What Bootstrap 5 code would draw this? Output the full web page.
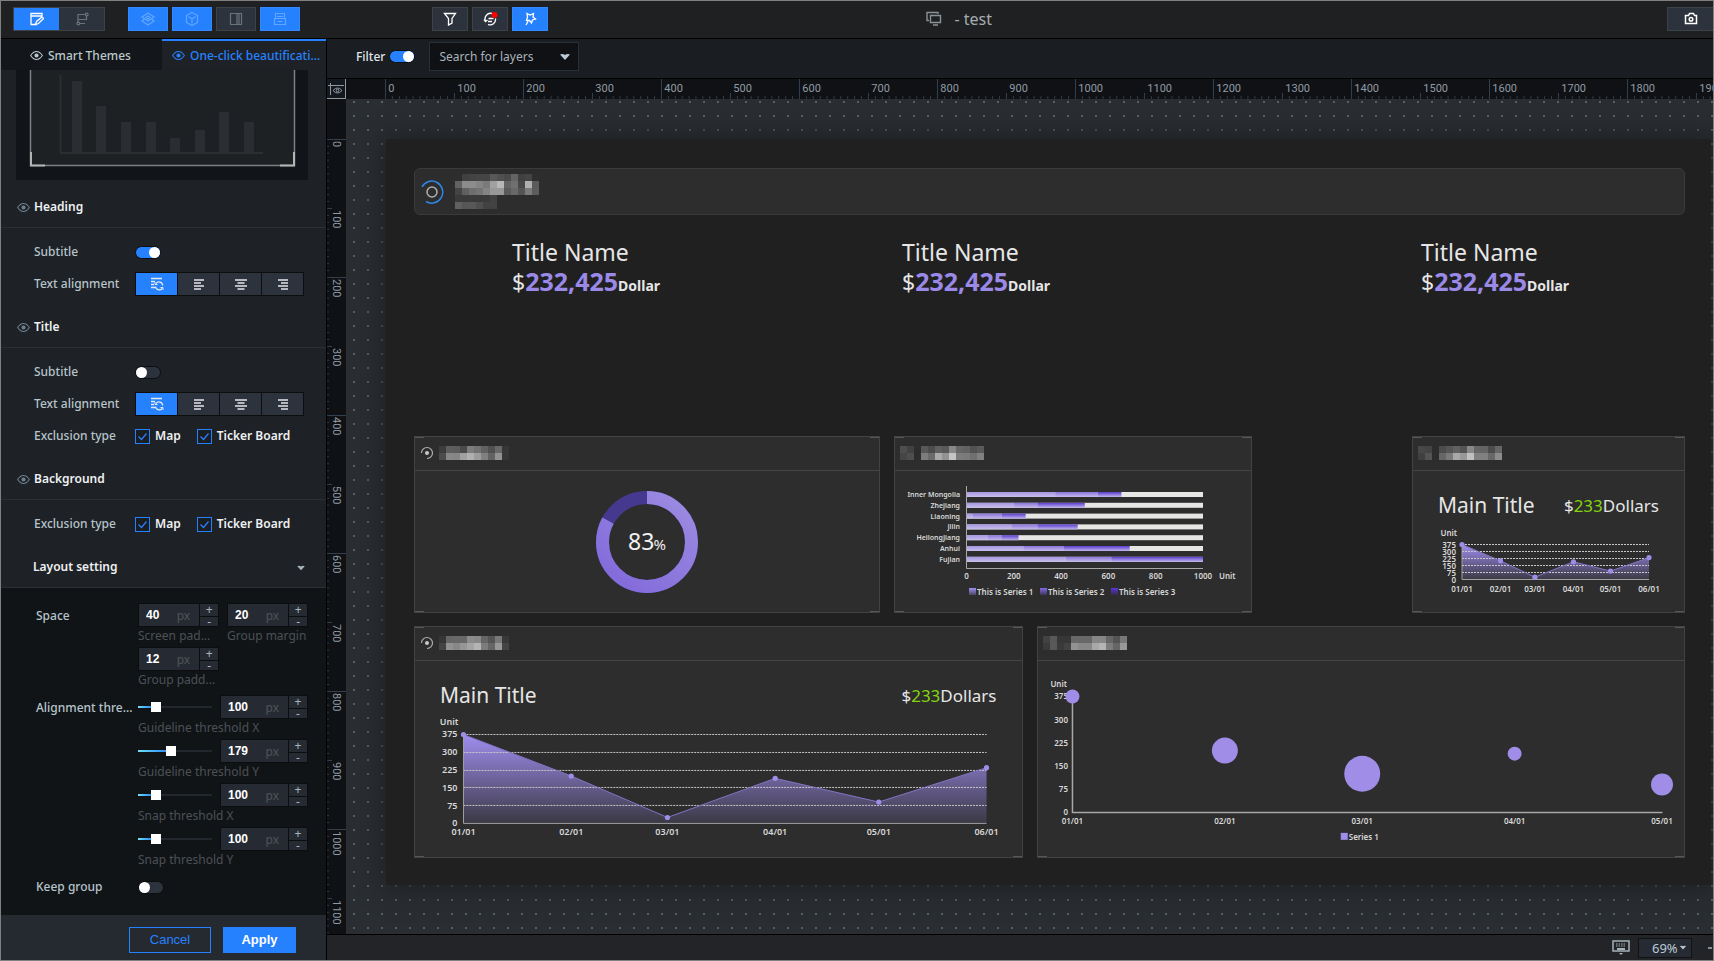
<!DOCTYPE html>
<html lang="en">
<head>
<meta charset="utf-8">
<meta name="viewport" content="width=device-width, initial-scale=1">
<title>test - screen editor</title>
<link href="https://cdn.jsdelivr.net/npm/bootstrap@5.3.0/dist/css/bootstrap.min.css" rel="stylesheet">
<style>
:root{--accent:#2681ff;--panel:#1e2125;--field:#262b33;--txt:#b6c4cc;--key:#0c0d0f}
html,body{height:100%}
body{font-family:"Noto Sans","Open Sans",sans-serif;font-size:12px;line-height:18px;color:#bcc9d4;background:#1b1d1f;overflow:hidden;border:1px solid #808080}
svg{display:block;flex:none}
button{font:inherit;color:inherit}
.app{height:100%}
.topbar{height:38px;background:#1f2022;border-bottom:1px solid #000;padding:0 0 2px 12px}
.tool{width:40px;height:24px;padding:0;border:1px solid #3c424a;background:#2d333d;display:flex;align-items:center;justify-content:center;color:#6b727d;border-radius:0}
.tool.on{background:var(--accent);border-color:#3388ff;color:#62a6ff}
.tool.lit{color:#fff}
.tool.t36{width:36px}
.modes{border:1px solid #3c424a}
.modes .tool{width:45px;height:22px;border:0}
.tools-a{margin-left:23px}
.tools-b{margin-left:132px}
.space-a{flex:379 1 0}.space-b{flex:676 1 0}
.doc-title{font-size:16px;color:#a5acb1}
.shot{width:46px;border-right:0}

.side{width:326px;background:var(--panel);border-right:1px solid #000}
.side-tab{height:31px;border:0;background:#13161a;color:#bcc9cc;font-weight:500;padding:2px 0 0 29px;display:flex;align-items:center;gap:5px;flex:0 1 161px;white-space:nowrap}
.side-tab.on{background:var(--panel);color:var(--accent);border-top:2px solid var(--accent);padding:0 0 0 10px;flex:1 1 164px}
.preview{margin:0 18px 0 15px;background:#111418}
.sec{height:48px;padding:8px 16px 0;border-bottom:1px solid #2b2f33;gap:4px;color:#eef1f3;font-size:12px;font-weight:600;margin:0}
.lab{width:101px;color:var(--txt);font-weight:500;white-space:nowrap}
.line{padding-left:33px;min-height:32px}
.sw{appearance:none;width:26px;height:13px;border-radius:7px;background:#2d333d;border:1px solid var(--key);margin:0;position:relative;display:block;flex:none}
.sw::after{content:"";position:absolute;left:0;top:0;width:11px;height:11px;border-radius:50%;background:#fff}
.sw:checked{background:var(--accent)}
.sw:checked::after{left:13px}
.aligns{border:1px solid var(--key);background:var(--key);gap:1px}
.aligns button{width:41px;height:22px;border:0;padding:0;background:#2d333d;color:#e4e8ec;display:flex;align-items:center;justify-content:center}
.aligns button.on{background:var(--accent)}
.tick{appearance:none;width:15px;height:15px;margin:0;border:1px solid var(--accent);background:#1a1d22;flex:none}
.tick:checked{background-image:url("data:image/svg+xml,%3Csvg xmlns='http://www.w3.org/2000/svg' viewBox='0 0 13 13'%3E%3Cpath d='M2.5 6.5l3 3 5-6' fill='none' stroke='%232681ff' stroke-width='1.2'/%3E%3C/svg%3E")}
.tick-l{color:#eef1f3;font-weight:600;gap:5px}
.detail{background:#111416;flex:1 1 auto;padding:15px 18px 0 35px}
.lab2{width:102px;color:var(--txt);font-weight:500;white-space:nowrap;flex:none}
.num{height:24px;border:1px solid var(--key);background:var(--key)}
.num input{min-width:0;width:38px;flex:1 1 auto;height:22px;border:0;background:var(--field);color:#fff;font:bold 12px "Liberation Sans",sans-serif;padding:0 0 0 7px}
.num .u{background:var(--field);color:#4d5359;padding:3px 9px 0 0;height:22px}
.num .st{width:18px;display:flex;flex-direction:column;gap:1px;margin-left:1px}
.num .st button{border:0;padding:0;height:12px;line-height:10px;font-size:12px;background:var(--field);color:#aab4bd;flex:none}
.num .st button+button{height:9px;line-height:7px}
.n82{width:81px}.n88{width:88px}
.hint{color:#4b5157;height:20px;line-height:18px;white-space:nowrap}
.cell{height:44px}
.sliders{padding-top:4px}
.keep{height:32px}
.rng{appearance:none;width:74px;height:10px;margin:0;background:linear-gradient(90deg,#6fe0f5,#2681ff) 0 50%/var(--f) 2px no-repeat,linear-gradient(#22272e,#22272e) 0 50%/100% 2px no-repeat}
.rng::-webkit-slider-thumb{appearance:none;width:10px;height:10px;background:#fff;border-radius:0}
.foot{height:45px;background:#252a31;padding:0 30px 0 0;gap:12px;font:13px/20px "Liberation Sans",sans-serif}
.foot button{height:26px;border:1px solid var(--accent);border-radius:0;padding:0;line-height:20px}
.b-cancel{width:82px;background:transparent;color:var(--accent)}
.foot .b-apply{width:73px;background:var(--accent);color:#fff;font-weight:700}

.filterbar{height:40px;background:#1a1d21;border-bottom:1px solid #000;padding:0 0 4px 29px}
.filter-l{color:#dfe4e8;font-weight:500}
.layer-pick{width:150px;height:29px;border:1px solid #2a3038;background:#0f1114 url("data:image/svg+xml,%3Csvg xmlns='http://www.w3.org/2000/svg' viewBox='0 0 12 8'%3E%3Cpath d='M1 1.5Q4 .5 6 2 8 .5 11 1.5L6 7z' fill='%23bcc9d4'/%3E%3C/svg%3E") right 7px center/12px 8px no-repeat;appearance:none;color:#aab3ba;padding:0 0 0 9px;margin-left:14px;border-radius:0}
.ruler-x{height:20px;background:#0f1114;overflow:hidden;padding-left:39px}
.corner{width:20px;border-right:1px solid #8c98a4;border-bottom:1px solid #8c98a4;background:#15181c}
.ruler-x span,.ruler-y span{flex:none;color:#8f9ba4;font:11px/14px Roboto,sans-serif;background-repeat:repeat-x,no-repeat;background-image:linear-gradient(90deg,#323a44 1px,transparent 1px),linear-gradient(#323f4e,#323f4e)}
.ruler-x span{width:69px;height:20px;padding:3px 0 0 3px;background-size:10% 3px,1px 6px;background-position:0 100%,0 100%}
.ruler-x .big{background-size:10% 3px,1px 100%}
.ruler-y{width:19px;background:#0f1114;overflow:hidden;padding-top:40px}
.ruler-y span{height:69px;width:19px;writing-mode:vertical-rl;padding:2px 3px 0 0;background-repeat:repeat-y,no-repeat;background-image:linear-gradient(#323a44 1px,transparent 1px),linear-gradient(#323f4e,#323f4e);background-size:2px 10%,5px 1px;background-position:0 0,0 0}
.ruler-y .big{background-size:2px 10%,100% 1px}
.desk{overflow:hidden;background:radial-gradient(circle at 8px 3px,#566164 1.2px,transparent 1.4px) 0 0/14px 14px,#2a2d31;padding:40px 2px 49px 40px}
.stage{background:#202020;box-shadow:0 0 24px 2px #1b1e22;padding:29px 26px 27px 28px;height:746px;color:#e6e6e6}
.banner{height:47px;border:1px solid #3a3a3a;border-radius:6px;background:#2d2d2d;padding-left:5px;gap:11px;flex:none}
.kpis{flex:1 1 auto;display:grid;grid-template-columns:390fr 519fr 264fr;padding:22px 0 0 98px}
.kpi-t{font-size:23px;line-height:30px}
.kpi-v{font-size:23px;line-height:28px}
.kpi-v b{color:#9b89e8;font-weight:700;font-size:25px}
.kpi-v i{font-style:normal;font-weight:700;font-size:14px}
.r1{display:grid;grid-template-columns:466fr 358fr 132fr 273fr;gap:14px;margin-bottom:13px;flex:none}
.r2{display:grid;grid-template-columns:609fr 649fr;gap:14px;flex:none}
.tile{--c:#575757;border:1px solid #424242;background:
 linear-gradient(var(--c),var(--c)) 0 0/9px 1px,linear-gradient(var(--c),var(--c)) 100% 0/9px 1px,linear-gradient(var(--c),var(--c)) 0 100%/9px 1px,linear-gradient(var(--c),var(--c)) 100% 100%/9px 1px,#2d2d2d;background-repeat:no-repeat;height:177px;min-width:0}
.r2 .tile{height:232px}
.tile-h{height:34px;border-bottom:1px solid #454545;padding:0 0 2px 5px;gap:5px}
.tile-m{height:53px;padding:17px 25px 0}
.tile-m h2{font-size:21px;line-height:34px;margin:0;font-weight:400}
.tile-m p{font-size:17px;line-height:36px;margin:0}
.tile-m em{font-style:normal;color:#84d40c}
.tile text{fill:#d8d8d8;font-family:"Noto Sans",sans-serif;font-weight:600;font-size:9px}
.tile svg.sm text{font-size:8px}
.tile svg.sm text.nm{font-size:7px}
.tile svg text.big{font-size:23px;fill:#f0f0f0;font-weight:400}
.tile svg text.pct{font-size:15px;fill:#f0f0f0;font-weight:400}
.status{height:26px;background:#222427;border-top:1px solid #000;padding-right:1px;margin-top:-1px}
.zoomsel{width:54px;height:20px;border:1px solid #101214;border-radius:0;appearance:none;color:#bcc9d4;font-size:13px;padding:0 0 0 13px;line-height:18px;background:#262b33 url("data:image/svg+xml,%3Csvg xmlns='http://www.w3.org/2000/svg' viewBox='0 0 12 8'%3E%3Cpath d='M1 1.5Q4 .5 6 2 8 .5 11 1.5L6 7z' fill='%23bcc9d4'/%3E%3C/svg%3E") right 4px center/8px 5px no-repeat}
</style>
</head>
<body>
<svg width="0" height="0" class="position-absolute" aria-hidden="true">
 <defs>
  <symbol id="eye" viewBox="0 0 12 10"><path d="M.6 5Q3 1.3 6 1.3T11.400 5Q9 8.700 6 8.700T.6 5z" fill="none" stroke="currentColor"/><circle cx="6" cy="5" r="1.900" fill="currentColor"/></symbol>
  <symbol id="al-a" viewBox="0 0 14 14"><path d="M1 1.500h11M1 4.500h4M1 7.500h3M1 10.500h4" stroke="currentColor" stroke-width="1.300"/><path d="M6 6.500A3.700 3.700 0 0 1 12.700 8.500M12.200 11.300A3.700 3.700 0 0 1 5.500 9.500" fill="none" stroke="currentColor" stroke-width="1.300"/><path d="M5 5v2.500h2.500M13 13v-2.500h-2.500" fill="none" stroke="currentColor"/></symbol>
  <symbol id="al-l" viewBox="0 0 12 12"><path d="M1 2h10M1 5h7M1 8h10M1 11h7" stroke="currentColor" stroke-width="1.500"/></symbol>
  <symbol id="al-c" viewBox="0 0 12 12"><path d="M0 2h12M2.500 5h7M0 8h12M2.500 11h7" stroke="currentColor" stroke-width="1.500"/></symbol>
  <symbol id="al-r" viewBox="0 0 12 12"><path d="M1 2h10M4 5h7M1 8h10M4 11h7" stroke="currentColor" stroke-width="1.500"/></symbol>
  <symbol id="spin" viewBox="0 0 14 14"><circle cx="7" cy="7" r="2" fill="#c8c8c8"/><path d="M1.500 7A5.500 5.500 0 1 1 7 12.500" fill="none" stroke="#b0b0b0" stroke-width="1.200"/></symbol>
  <linearGradient id="area" x1="0" y1="0" x2="0" y2="1"><stop offset="0" stop-color="#a08ef0"/><stop offset="1" stop-color="#a08ef0" stop-opacity=".12"/></linearGradient>
  <linearGradient id="ring" x1="1" y1=".8" x2="0" y2="0"><stop offset="0" stop-color="#9a89e0"/><stop offset="1" stop-color="#8068da"/></linearGradient>
  <linearGradient id="s1" x1="0" y1="0" x2="0" y2="1"><stop offset="0" stop-color="#a595e2"/><stop offset="1" stop-color="#c8c0ea"/></linearGradient>
  <linearGradient id="s2" x1="0" y1="0" x2="0" y2="1"><stop offset="0" stop-color="#8a74dc"/><stop offset="1" stop-color="#c4baea"/></linearGradient>
  <linearGradient id="s3" x1="0" y1="0" x2="0" y2="1"><stop offset="0" stop-color="#5b3ccf"/><stop offset="1" stop-color="#c0b4ec"/></linearGradient>
  <linearGradient id="k1" x1="0" y1="0" x2="0" y2="1"><stop offset="0" stop-color="#a08ef0"/><stop offset="1" stop-color="#4a4560"/></linearGradient>
  <linearGradient id="k2" x1="0" y1="0" x2="0" y2="1"><stop offset="0" stop-color="#8468e8"/><stop offset="1" stop-color="#3c3654"/></linearGradient>
  <linearGradient id="k3" x1="0" y1="0" x2="0" y2="1"><stop offset="0" stop-color="#5f35d8"/><stop offset="1" stop-color="#322a4c"/></linearGradient>
 </defs>
</svg>
<div class="app d-flex flex-column">
 <header class="topbar d-flex align-items-center flex-shrink-0">
  <div class="modes d-flex">
   <button class="tool on lit" aria-label="Edit mode"><svg width="15" height="14" viewBox="0 0 15 14" fill="none" stroke="currentColor" stroke-width="1.300"><path d="M8 12.500H2v-11h11V4M2 4h11M6.500 12.500l1-3L13 5l1.500 1.500-5 5z"/></svg></button>
   <button class="tool" aria-label="Flow mode"><svg width="14" height="14" viewBox="0 0 14 14" fill="none" stroke="currentColor" stroke-width="1.200"><path d="M10 2.500H3v5h8.500V4M3 7.500v3M5 11.500h5"/><circle cx="11.700" cy="2.500" r="1.400"/><circle cx="3.300" cy="11.500" r="1.400"/></svg></button>
  </div>
  <div class="d-flex gap-1 tools-a">
   <button class="tool on" aria-label="Layers"><svg width="16" height="16" viewBox="0 0 16 16" fill="none" stroke="currentColor" stroke-width="1.200"><path d="M8 2l6 4-6 4-6-4zM4.500 8L2 10l6 4 6-4-2.500-2M8 5l2 1.500L8 8 6 6.500z"/></svg></button>
   <button class="tool on" aria-label="Components"><svg width="16" height="16" viewBox="0 0 16 16" fill="none" stroke="currentColor" stroke-width="1.200"><path d="M8 1.500l5.500 3v7L8 14.500l-5.500-3v-7zM4.500 5.500L8 8l3.500-2.500M8 8v4.500"/></svg></button>
   <button class="tool" aria-label="Columns"><svg width="14" height="14" viewBox="0 0 14 14" fill="none" stroke="currentColor" stroke-width="1.200"><path d="M1.500 1.500h11v11h-11zM8 1.500v11M10 1.500v11"/></svg></button>
   <button class="tool on" aria-label="Toolbox"><svg width="14" height="14" viewBox="0 0 14 14" fill="none" stroke="currentColor" stroke-width="1.200"><path d="M1.500 6.500h11v6h-11zM2.500 6.500v-5h9v5M4 4.500h6M4.500 9.500h5"/></svg></button>
  </div>
  <div class="d-flex gap-1 tools-b">
   <button class="tool t36 lit" aria-label="Filter layers"><svg width="14" height="14" viewBox="0 0 14 14" fill="none" stroke="currentColor" stroke-width="1.300"><path d="M1.500 1.500h11L9 6.500v4.500l-3.500 2V6.500z"/></svg></button>
   <button class="tool t36 lit" aria-label="Sync"><svg width="15" height="14" viewBox="0 0 15 14" fill="none" stroke="currentColor" stroke-width="1.300"><path d="M9 1.500A5.500 5.500 0 0 0 2.500 9M5 12.500A5.500 5.500 0 0 0 12.500 6.500M1 7.500L2.500 9.500 4.500 8M5.500 6.500h5M9 9.500H5"/><circle cx="11.500" cy="3" r="3" fill="red" stroke="none"/></svg></button>
   <button class="tool t36 on lit" aria-label="Beautify"><svg width="14" height="14" viewBox="0 0 14 14" fill="none" stroke="currentColor" stroke-width="1.300"><path d="M4 1.500l3 1.500 3.500-1.500-.5 3.500 2.500 2-3 1-1 3-2-2.500H3.500L4.500 5zM5 9.500l-2 3.500"/></svg></button>
  </div>
  <div class="space-a"></div>
  <svg width="16" height="15" viewBox="0 0 16 15" fill="none" stroke="#8b9297" stroke-width="1.400"><path d="M3 9.500H1v-8h11V3M4.500 4.500h10v7h-10zM7 14h5"/></svg>
  <div class="doc-title ms-2 ps-1">- test</div>
  <div class="space-b"></div>
  <button class="tool shot lit" aria-label="Take snapshot"><svg width="14" height="13" viewBox="0 0 14 13" fill="none" stroke="currentColor" stroke-width="1.500"><path d="M1.500 3.500h3L5.500 1.500h4l1 2h2v8h-11z"/><circle cx="7" cy="7.200" r="1.800"/></svg></button>
 </header>
 <div class="d-flex flex-grow-1" style="min-height:0">
  <aside class="side d-flex flex-column flex-shrink-0">
   <div class="d-flex">
    <button class="side-tab"><svg width="13" height="11"><use href="#eye"/></svg>Smart Themes</button>
    <button class="side-tab on"><svg width="13" height="11"><use href="#eye"/></svg>One-click beautificati...</button>
   </div>
   <div class="preview">
    <svg class="w-100" viewBox="0 0 292 110" aria-hidden="true">
     <rect x="14.500" y="-5" width="264" height="100.500" fill="#1e2124" stroke="#7d8084" stroke-width="1.500"/>
     <path d="M15 82v13.500h14M278 82v13.500h-14" fill="none" stroke="#b4b4b4" stroke-width="2"/>
     <path d="M44.500 5v78M44 83h203" stroke="#2b2d31" stroke-width="2"/>
     <path d="M56 11h10v71H56zM80 36h10v46H80zM105 52h10v30h-10zM130 52h10v30h-10zM154 68h10v14h-10zM179 60h10v22h-10zM203 42h10v40h-10zM228 52h10v30h-10z" fill="#2a2d31"/>
    </svg>
   </div>
   <h3 class="sec d-flex align-items-center"><svg width="13" height="11" color="#6d7f92"><use href="#eye"/></svg>Heading</h3>
   <div class="pt-2">
    <div class="line d-flex align-items-center"><label class="lab" for="sub1">Subtitle</label><input class="sw" type="checkbox" id="sub1" checked></div>
    <div class="line d-flex align-items-center"><span class="lab">Text alignment</span><div class="aligns d-flex"><button class="on" aria-label="Default"><svg width="14" height="14"><use href="#al-a"/></svg></button><button aria-label="Left"><svg width="12" height="12"><use href="#al-l"/></svg></button><button aria-label="Center"><svg width="12" height="12"><use href="#al-c"/></svg></button><button aria-label="Right"><svg width="12" height="12"><use href="#al-r"/></svg></button></div></div>
   </div>
   <h3 class="sec d-flex align-items-center"><svg width="13" height="11" color="#6d7f92"><use href="#eye"/></svg>Title</h3>
   <div class="pt-2">
    <div class="line d-flex align-items-center"><label class="lab" for="sub2">Subtitle</label><input class="sw" type="checkbox" id="sub2"></div>
    <div class="line d-flex align-items-center"><span class="lab">Text alignment</span><div class="aligns d-flex"><button class="on" aria-label="Default"><svg width="14" height="14"><use href="#al-a"/></svg></button><button aria-label="Left"><svg width="12" height="12"><use href="#al-l"/></svg></button><button aria-label="Center"><svg width="12" height="12"><use href="#al-c"/></svg></button><button aria-label="Right"><svg width="12" height="12"><use href="#al-r"/></svg></button></div></div>
    <div class="line d-flex align-items-center"><span class="lab">Exclusion type</span><label class="tick-l d-flex align-items-center me-3"><input class="tick" type="checkbox" checked>Map</label><label class="tick-l d-flex align-items-center"><input class="tick" type="checkbox" checked>Ticker Board</label></div>
   </div>
   <h3 class="sec d-flex align-items-center"><svg width="13" height="11" color="#6d7f92"><use href="#eye"/></svg>Background</h3>
   <div class="pt-2">
    <div class="line d-flex align-items-center"><span class="lab">Exclusion type</span><label class="tick-l d-flex align-items-center me-3"><input class="tick" type="checkbox" checked>Map</label><label class="tick-l d-flex align-items-center"><input class="tick" type="checkbox" checked>Ticker Board</label></div>
   </div>
   <h3 class="sec d-flex align-items-center"><span class="ms-3 me-auto">Layout setting</span><svg width="10" height="6" viewBox="0 0 12 8" class="me-1"><path d="M1 1.500Q4 .5 6 2 8 .5 11 1.500L6 7z" fill="#a8b4be"/></svg></h3>
   <div class="detail">
    <div class="d-flex">
     <div class="lab2 pt-1">Space</div>
     <div class="flex-grow-1">
      <div class="d-flex justify-content-between" id="spaces"></div>
      <div class="d-flex" id="spaces2"></div>
     </div>
    </div>
    <div class="d-flex sliders">
     <div class="lab2 pt-1">Alignment thre...</div>
     <div class="flex-grow-1" id="thresholds"></div>
    </div>
    <div class="d-flex align-items-center keep"><label class="lab2" for="keep">Keep group</label><input class="sw" type="checkbox" id="keep"></div>
   </div>
   <div class="foot d-flex align-items-center justify-content-end flex-shrink-0 pt-1"><button class="b-cancel">Cancel</button><button class="b-apply">Apply</button></div>
  </aside>
  <main class="flex-grow-1 d-flex flex-column" style="min-width:0">
   <div class="filterbar d-flex align-items-center flex-shrink-0"><label for="flt" class="me-1 filter-l">Filter</label><input class="sw" type="checkbox" id="flt" checked>
    <select class="layer-pick" aria-label="Search for layers"><option>Search for layers</option></select></div>
   <div class="d-flex flex-shrink-0">
    <div class="corner d-flex align-items-center justify-content-center"><svg width="16" height="14" viewBox="0 0 16 14" fill="none" stroke="#8c98a4"><path d="M2.500 1v12M0 3.500h16M5 8.500q4.500-5 9 0-4.500 5-9 0z"/><circle cx="9.500" cy="8.500" r="1.300"/></svg></div>
    <div class="ruler-x d-flex flex-grow-1" id="rx"></div>
   </div>
   <div class="d-flex flex-grow-1" style="min-height:0">
    <div class="ruler-y d-flex flex-column flex-shrink-0" id="ry"></div>
    <div class="desk flex-grow-1">
     <div class="stage d-flex flex-column">
      <div class="banner d-flex align-items-center">
       <svg width="24" height="24" viewBox="0 0 24 24" fill="none"><circle cx="12" cy="12" r="5" stroke="#b0b0b0" stroke-width="1.500"/><path d="M2 7A11 11 0 1 1 6 21.500" stroke="#2f86e8" stroke-width="1.500"/></svg>
       <svg data-mosaic="- 40 43 45 45 58 50 4a 64 40 44 2e/62 8c 8c 84 7a a0 b8 64 70 48 b0 5a/44 60 6e 74 84 98 98 5a 68 54 7a 5c/3a 3a 3a 3a 3a 42/60 56 58 4e 42 42"></svg>
      </div>
      <div class="kpis">
       <div><div class="kpi-t">Title Name</div><div class="kpi-v">$<b>232,425</b><i>Dollar</i></div></div>
       <div><div class="kpi-t">Title Name</div><div class="kpi-v">$<b>232,425</b><i>Dollar</i></div></div>
       <div><div class="kpi-t">Title Name</div><div class="kpi-v">$<b>232,425</b><i>Dollar</i></div></div>
      </div>
      <div class="r1">
       <section class="tile">
        <div class="tile-h d-flex align-items-center"><svg width="14" height="14"><use href="#spin"/></svg><svg data-mosaic="3c 5e 5c 4a 7c 72 62 50 68 36/4c 88 86 a0 b0 9c 80 62 92 36"></svg></div>
        <div class="d-flex justify-content-center pt-3 mt-1"><svg width="102" height="102" viewBox="0 0 102 102" fill="none" stroke-width="13"><circle cx="51" cy="51" r="44.500" stroke="#45398f"/><circle cx="51" cy="51" r="44.500" stroke="url(#ring)" pathLength="100" stroke-dasharray="83 17" transform="rotate(-90 51 51)"/><text class="big" stroke="none" x="32" y="59">83</text><text class="pct" x="57.500" y="59">%</text></svg></div>
       </section>
       <section class="tile">
        <div class="tile-h d-flex align-items-center"><svg data-mosaic="4e 42 - 58 4c 60 5a 88 66 62 52 5a/46 4e - 7c 6a aa 92 c4 7c 7a 70 80"></svg></div>
        <svg class="w-100 sm" viewBox="0 0 356 140" id="bars"></svg>
       </section>
       <div></div>
       <section class="tile">
        <div class="tile-h d-flex align-items-center"><svg data-mosaic="48 44 - 4c 56 60 54 88 66 64 4c 66/40 54 - 66 7a a8 98 c0 80 80 68 8c"></svg></div>
        <div class="tile-m d-flex justify-content-between"><h2>Main Title</h2><p>$<em>233</em>Dollars</p></div>
        <svg class="w-100 sm" viewBox="0 0 271 78" id="trend1"></svg>
       </section>
      </div>
      <div class="r2">
       <section class="tile">
        <div class="tile-h d-flex align-items-center"><svg width="14" height="14"><use href="#spin"/></svg><svg data-mosaic="36 66 68 68 8c 88 66 54 78 38/44 92 88 96 a4 b4 7c 66 98 44"></svg></div>
        <div class="tile-m d-flex justify-content-between"><h2>Main Title</h2><p>$<em>233</em>Dollars</p></div>
        <svg class="w-100" viewBox="0 0 607 130" id="trend2"></svg>
       </section>
       <section class="tile">
        <div class="tile-h d-flex align-items-center"><svg data-mosaic="42 58 36 36 68 68 68 86 86 66 54 78/3a 58 3a 42 92 88 88 a8 b4 7c 66 98"></svg></div>
        <svg class="w-100 sm" viewBox="0 0 647 195" id="bubbles"></svg>
       </section>
      </div>
     </div>
    </div>
   </div>
   <footer class="status d-flex align-items-center justify-content-end flex-shrink-0">
    <svg width="18" height="15" viewBox="0 0 18 15" class="me-2"><path d="M1 1h16v10H1z" fill="none" stroke="#a5b2bb" stroke-width="1.500"/><path d="M4 4h10M4 6h10" stroke="#a5b2bb" stroke-dasharray="1.500 1"/><path d="M5 8h8v2H5zM7 13h4l-2 2z" fill="#a5b2bb"/></svg>
    <select class="zoomsel" aria-label="Zoom"><option>69%</option></select>
    <svg width="4" height="10" class="ms-3"><path d="M0 5h4" stroke="#a5b2bb" stroke-width="1.500"/></svg>
   </footer>
  </main>
 </div>
</div>
<script src="https://cdn.jsdelivr.net/npm/bootstrap@5.3.0/dist/js/bootstrap.bundle.min.js"></script>
<script>
const $ = id => document.getElementById(id);

// rulers: one cell per 100 canvas units
for (let i = 0; i < 20; i++) {
  const cell = `<span class="${i % 2 ? '' : 'big'}">${i * 100}</span>`;
  $('rx').innerHTML += cell;
  if (i < 12) $('ry').innerHTML += cell;
}

// number fields and threshold sliders
const num = (name, v, cls) => `<div class="num d-flex ${cls}"><input type="text" aria-label="${name}" value="${v}"><span class="u">px</span><span class="st"><button aria-label="Increase">+</button><button aria-label="Decrease">-</button></span></div>`;
const field = (v, hint) => `<div class="cell n82">${num(hint, v, 'n82')}<div class="hint">${hint}</div></div>`;
$('spaces').innerHTML = field(40, 'Screen pad...') + field(20, 'Group margin');
$('spaces2').innerHTML = field(12, 'Group padd...');
$('thresholds').innerHTML = [[100, 'Guideline threshold X'], [179, 'Guideline threshold Y'], [100, 'Snap threshold X'], [100, 'Snap threshold Y']].map(([v, n]) =>
  `<div class="cell"><div class="d-flex align-items-center justify-content-between"><input class="rng" type="range" min="32" max="368" value="${v}" aria-label="${n}" style="--f:${Math.round((v - 32) / 3.36)}%">${num(n, v, 'n88')}</div><div class="hint">${n}</div></div>`).join('');

// redacted captions
document.querySelectorAll('[data-mosaic]').forEach(s => {
  const rows = s.dataset.mosaic.split('/').map(r => r.split(' '));
  const w = rows[0].length * 7, h = rows.length * 7;
  s.setAttribute('width', w); s.setAttribute('height', h);
  s.setAttribute('shape-rendering', 'crispEdges');
  s.innerHTML = rows.map((r, y) => r.map((c, x) => c === '-' ? '' : `<rect x="${x * 7}" y="${y * 7}" width="7" height="7" fill="#${c + c + c}"/>`).join('')).join('');
});

const text = (x, y, t, a = 'middle', c = '') => `<text class="${c}" x="${x}" y="${y}" text-anchor="${a}">${t}</text>`;
const ticks = [0, 75, 150, 225, 300, 375];

function trend(id, l, r, t, b, dot) {
  const data = [[0, 375], [.206, 200], [.39, 25], [.596, 190], [.794, 90], [1, 235]];
  const Y = v => b - (b - t) * v / 375;
  const pts = data.map(([f, v]) => [l + (r - l) * f, Y(v)]);
  const path = pts.map(p => p.join(',')).join(' ');
  let s = text(l - 5, t - 9, 'Unit', 'end');
  s += `<polygon points="${l},${b} ${path} ${r},${b}" fill="url(#area)"/>`;
  ticks.forEach(v => {
    s += text(l - 6, Y(v) + 3, v, 'end');
    if (v) s += `<path d="M${l} ${Math.floor(Y(v)) + .5}H${r}" stroke="#c8c8c8" stroke-dasharray="2 1"/>`;
  });
  s += `<path d="M${l} ${t}V${b}H${r}" fill="none" stroke="#a0a0a0"/><polyline points="${path}" fill="none" stroke="#8472c4"/>`;
  pts.forEach(([x, y], i) => s += `<circle cx="${x}" cy="${y}" r="${dot}" fill="#9f8de8"/>` + text(x, b + 12, `0${i + 1}/01`));
  $(id).innerHTML = s;
}
trend('trend1', 49, 236, 20.5, 55.5, 2.6);
trend('trend2', 48.5, 572, 20.5, 109.5, 2.6);

{ // stacked bars
  const X = v => 71.5 + v * .2365;
  const rows = [['Inner Mongolia', 375, 555, 655], ['Zhejiang', 200, 300, 500], ['Liaoning', 25, 150, 250], ['Jilin', 190, 300, 470], ['HeilongJiang', 90, 150, 220], ['Anhui', 240, 410, 690], ['Fujian', 420, 612, 1000]];
  let s = '';
  rows.forEach(([n, ...e], i) => {
    const y = 21 + i * 10.8;
    s += text(65, y + 5, n, 'end', 'nm') + `<rect x="71.5" y="${y}" width="236.5" height="5" fill="#e6e6e4"/>`;
    let from = 0;
    e.forEach((v, k) => { s += `<rect x="${X(from)}" y="${y}" width="${(v - from) * .2365}" height="5" fill="url(#s${k + 1})"/>`; from = v; });
  });
  s += '<path d="M71.5 15V97.500H308" fill="none" stroke="#a8a8a8"/>';
  for (let v = 0; v <= 1000; v += 200) s += text(X(v), 108, v);
  s += text(324, 108, 'Unit', 'start');
  [74, 145, 216].forEach((x, i) => s += `<rect x="${x}" y="117" width="7" height="7" fill="url(#k${i + 1})"/>` + text(x + 8, 124, `This is Series ${i + 1}`, 'start'));
  $('bars').innerHTML = s;
}

{ // bubbles
  const Y = v => 151.5 - v * 116 / 375;
  let s = text(29, 26, 'Unit', 'end') + '<path d="M34.500 35V151.500H625" fill="none" stroke="#a8a8a8" stroke-width="1.500"/>';
  ticks.forEach(v => s += text(30, Y(v) + 3, v, 'end'));
  [[0, 375, 7], [.2585, 200, 13], [.4915, 125, 18], [.75, 190, 7], [1, 90, 11]].forEach(([f, v, r], i) => {
    const x = 34.5 + 590 * f;
    s += `<circle cx="${x}" cy="${Y(v)}" r="${r}" fill="#9f8de8"/>` + text(x, 163, `0${i + 1}/01`);
  });
  s += '<rect x="303" y="172" width="7" height="7" fill="#9f8de8"/>' + text(311, 179, 'Series 1', 'start');
  $('bubbles').innerHTML = s;
}
</script>
</body>
</html>
